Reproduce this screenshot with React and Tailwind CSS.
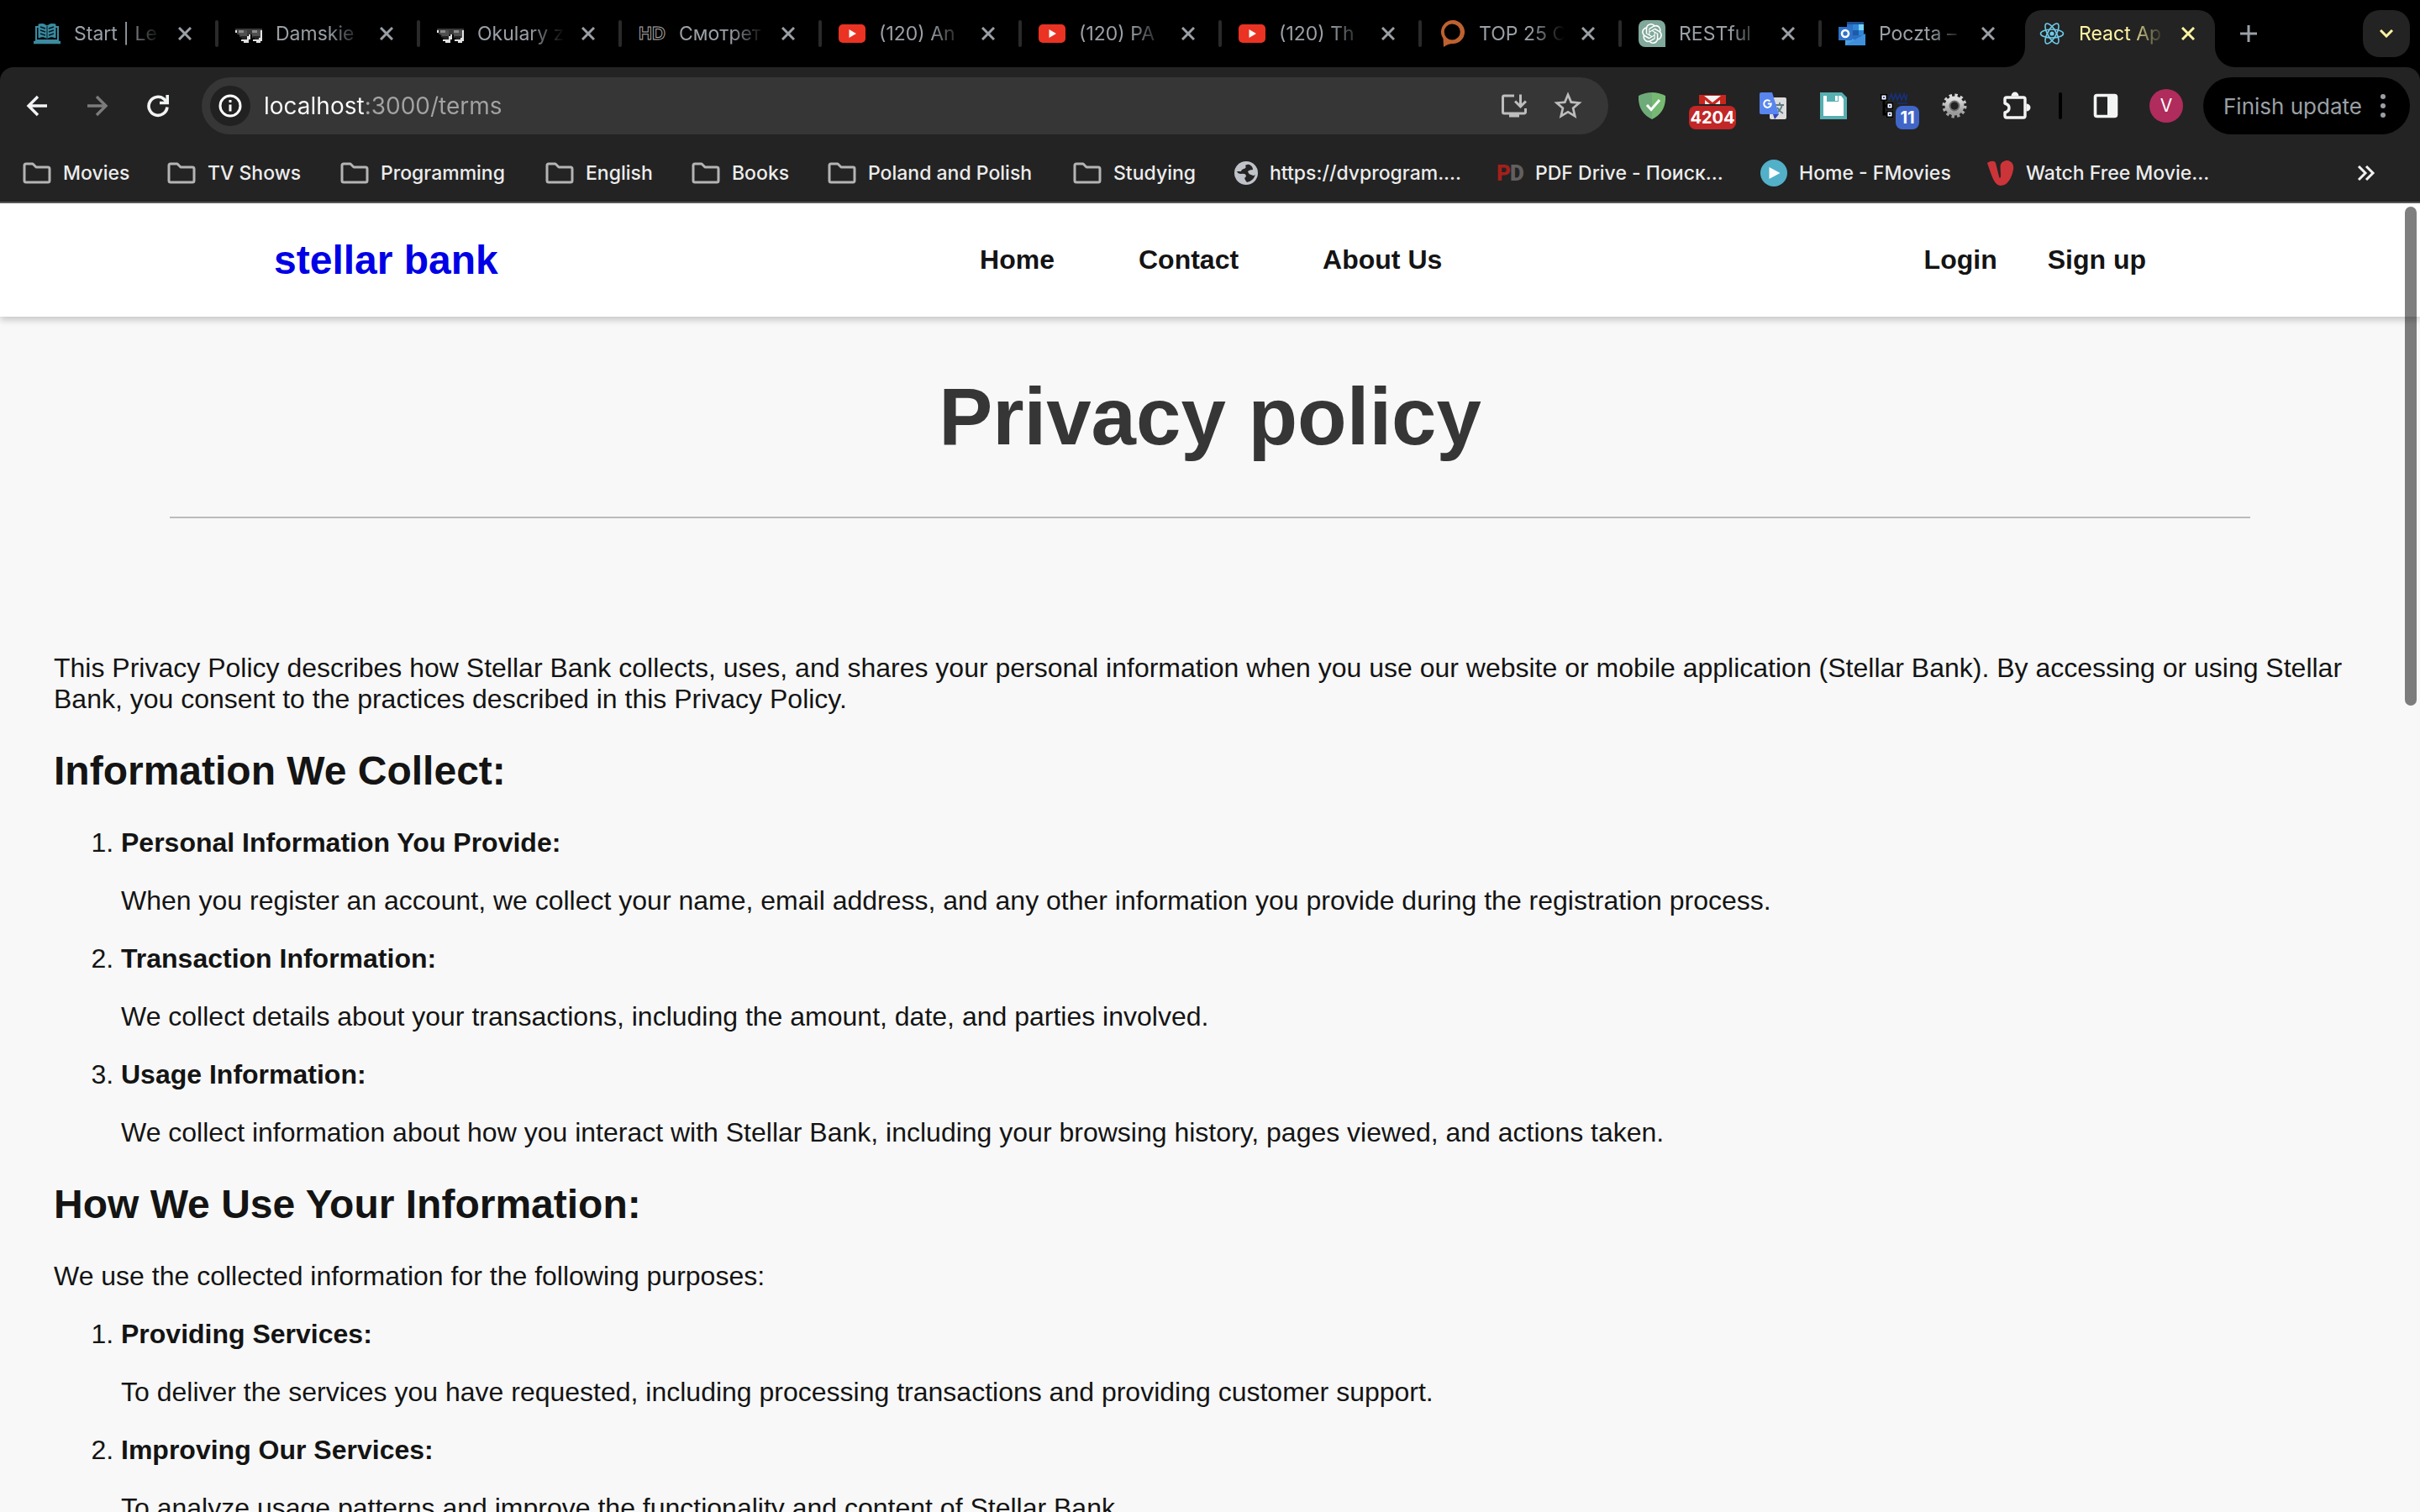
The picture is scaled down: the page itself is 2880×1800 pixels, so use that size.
import React from "react";
import { MdInstallDesktop, MdStarBorder } from "react-icons/md";
import { SiOpenai } from "react-icons/si";

/* ---------- favicons ---------- */

const BookIcon = () => (
  <svg viewBox="0 0 32 26" className="w-8 h-[26px]" fill="none" stroke="#3b8ba0">
    <path d="M6 2 Q12 0 16 4 Q20 0 26 2 V18 Q20 15 16 19 Q12 15 6 18Z" fill="#3b8ba0" strokeWidth="1" />
    <path d="M8 5 L14 7 M8 9 L14 11 M8 13 L14 15 M24 5 L18 7 M24 9 L18 11 M24 13 L18 15" stroke="#04171c" strokeWidth="1.5" />
    <path d="M16 4 V19" stroke="#04171c" strokeWidth="1" />
    <path d="M6 5 H3 V21 H29 V5 H26" strokeWidth="2" />
    <path d="M0 23.5 H32" strokeWidth="3.5" />
  </svg>
);

const GlassesIcon = () => (
  <svg viewBox="0 0 32 20" className="mt-1.5 w-8 h-5" shapeRendering="crispEdges">
    <path d="M0 1 H32 V3 H30 V12 H20 V8 H15 V12 H6 L4 8 H2 V3 H0Z" fill="#3a3a3a" />
    <path d="M4 3 H14 V12 H8 V10 H6 V8 H4Z M20 3 H30 V12 H22 V10 H20Z" fill="#505050" />
    <path d="M4 3 H10 V6 H4Z M20 3 H26 V6 H20Z" fill="#8c8c8c" />
    <path d="M6 10 H14 V14 H8 V12 H6Z M21 10 H29 V14 H23 V12 H21Z" fill="#242424" />
    <path d="M0 3 H2 V6 H0Z M16 8 H18 V14 H16 V18 H10 V16 H7 V14 H14 V10 H16Z M30 3 H32 V16 H30 V18 H25 V16 H21 V14 H28 V12 H30Z" fill="#e2e2e2" />
  </svg>
);

const HdIcon = () => (
  <span className="w-8 text-center text-[22px] leading-8 font-bold text-transparent [-webkit-text-stroke:1px_#a8a8a8] font-['Liberation_Sans',sans-serif]">HD</span>
);

const YoutubeIcon = () => (
  <svg viewBox="0 0 32 22" className="w-8 h-[22px]">
    <rect width="32" height="22" rx="5" fill="#ea3323" />
    <path d="M12.5 6 L21 11 L12.5 16Z" fill="#fff" />
  </svg>
);

const BubbleIcon = () => (
  <svg viewBox="0 0 32 32" className="w-8 h-8">
    <path d="M6 32 L5.500 22 A14 14 0 1 1 18 28 Q12 27.500 6 32Z M16 4.500 A9.500 9.500 0 1 0 16.500 23.500 A9.500 9.500 0 1 0 16 4.500Z" fill="#bf6130" fillRule="evenodd" />
  </svg>
);

const OpenAiIcon = () => (
  <span className="flex h-8 w-8 items-center justify-center rounded-tl-lg rounded-tr-lg rounded-bl-lg bg-[#80a89b]">
    <SiOpenai className="h-6 w-6 text-white" />
  </span>
);

const OutlookIcon = () => (
  <svg viewBox="0 0 32 28" className="w-8 h-7">
    <rect x="10" y="0" width="20" height="22" fill="#2a6fc4" />
    <rect x="10" y="0" width="20" height="3" fill="#1d4f91" />
    <rect x="17" y="3" width="7" height="7" fill="#2f86d6" />
    <rect x="24" y="3" width="6" height="7" fill="#76d3fa" />
    <rect x="17" y="10" width="7" height="6" fill="#1f5aa8" />
    <rect x="24" y="10" width="6" height="6" fill="#2f86d6" />
    <path d="M8 28 V16 L20 22 L32 14 V28Z" fill="#4aa0e3" />
    <path d="M8 28 L32 14 V28Z" fill="#3f8fdc" />
    <rect x="0" y="6" width="16" height="16" fill="#2f72c9" />
    <circle cx="8" cy="14" r="4" fill="none" stroke="#fff" strokeWidth="2.6" />
  </svg>
);

const ReactIcon = () => (
  <svg viewBox="-16 -16 32 32" className="w-8 h-8" fill="none" stroke="#6fc9e8" strokeWidth="1.6">
    <ellipse rx="13.5" ry="5" />
    <ellipse rx="13.5" ry="5" transform="rotate(60)" />
    <ellipse rx="13.5" ry="5" transform="rotate(120)" />
    <circle r="2.6" fill="#6fc9e8" stroke="none" />
  </svg>
);

/* ---------- toolbar drawings ---------- */

const CloseIcon = () => (
  <svg viewBox="0 0 16 16" className="w-4 h-4" fill="none" stroke="currentColor" strokeWidth="3">
    <path d="M1 1 L15 15 M15 1 L1 15" />
  </svg>
);

const ArrowIcon = ({ className = "" }) => (
  <svg viewBox="0 0 26 26" className={"w-[26px] h-[26px] " + className} fill="none" stroke="currentColor" strokeWidth="3.4">
    <path d="M25 13 H3 M14 2 L3 13 L14 24" />
  </svg>
);

const ReloadIcon = () => (
  <svg viewBox="0 0 28 28" className="w-7 h-7" fill="none" stroke="currentColor" strokeWidth="3.6">
    <path d="M25 15.5 A11 11 0 1 1 21.5 6.2 L24.5 9.5" />
    <path d="M25.2 1 V10.5 H16" />
  </svg>
);

const InfoIcon = () => (
  <svg viewBox="0 0 28 28" className="w-7 h-7" fill="none" stroke="#fff" strokeWidth="3">
    <circle cx="14" cy="14" r="12" />
    <path d="M14 12.5 V20.5 M14 7 V10" />
  </svg>
);

const ShieldIcon = () => (
  <svg viewBox="0 0 32 32" className="w-8 h-8">
    <path d="M16 0 Q8 0 0 4 Q-1 24 16 32Z" fill="#6eab78" />
    <path d="M16 0 Q24 0 32 4 Q33 24 16 32Z" fill="#76b972" />
    <path d="M10 15 L15 20.5 L25 9" fill="none" stroke="#fff" strokeWidth="3" />
  </svg>
);

const MailIcon = () => (
  <svg viewBox="0 0 32 32" className="w-8 h-8">
    <rect y="3" width="32" height="11" fill="#c9261e" />
    <path d="M6 4 H26 L16 12Z" fill="#f3f3f3" />
    <path d="M7 14 V9 L13 14Z M25 14 V9 L19 14Z" fill="#eee" />
  </svg>
);

const TranslateIcon = () => (
  <svg viewBox="0 0 32 32" className="w-8 h-8">
    <rect x="12" y="6" width="20" height="26" rx="2" fill="#dcdcdc" />
    <path d="M19 15 H29 M24 12 V15 M27 15 Q25 22 19 25 M21 18 Q24 23 28 25" stroke="#5c7c86" strokeWidth="1.8" fill="none" />
    <path d="M16 26 H23 L18 32Z" fill="#3446b8" />
    <path d="M2 0 H15 L23 26 H2 Q0 26 0 24 V2 Q0 0 2 0Z" fill="#5885ee" />
    <path d="M12.5 10.5 A4.3 4.3 0 1 0 13.8 13.6 H9.8" stroke="#fff" strokeWidth="2" fill="none" />
  </svg>
);

const SaveIcon = () => (
  <svg viewBox="0 0 32 32" className="w-8 h-8">
    <path d="M0 0 H26 L32 6 V32 H0Z" fill="#57afb2" />
    <path d="M4 4 H8 V11 H22 V4 H25 L28 8 V28 H4Z" fill="#fff" />
    <path d="M18 4 H21 V10 H18Z" fill="#fff" />
  </svg>
);

const TreeIcon = () => (
  <svg viewBox="0 0 32 32" className="w-8 h-8" fill="none">
    <path d="M4 8 V26 H9 M4 16 H9" stroke="#000" strokeWidth="3" />
    <path d="M10 9 L13 2 L15 9 L18 2 L20 9 L23 2 L25 9 L28 2 L30 9 L32 2 M20 13 H32" stroke="#16307c" strokeWidth="1.6" />
    {[[4, 6], [11, 16], [11, 26]].map(([x, y]) => (
      <g key={y}>
        <rect x={x - 4} y={y - 4} width="8" height="8" fill="#000" />
        <rect x={x - 2.5} y={y - 2.5} width="5" height="5" fill="#fff" />
        <rect x={x - 1} y={y - 1} width="2" height="2" fill="#2b4fc0" />
      </g>
    ))}
  </svg>
);

const GearIcon = () => (
  <svg viewBox="0 0 32 32" className="w-8 h-8" fill="none">
    <defs>
      <linearGradient id="steel" x1="0" y1="0" x2="0" y2="1">
        <stop offset="0" stopColor="#dedede" />
        <stop offset="1" stopColor="#9a9a9a" />
      </linearGradient>
    </defs>
    <circle cx="16" cy="16" r="12.5" stroke="url(#steel)" strokeWidth="4" strokeDasharray="3.3 3.24" />
    <circle cx="16" cy="16" r="8.2" stroke="url(#steel)" strokeWidth="6.5" />
    <circle cx="16" cy="16" r="5.6" stroke="#6b6b6b" strokeWidth="1.6" />
  </svg>
);

const PuzzleIcon = () => (
  <svg viewBox="0 0 34 34" className="ml-1 w-[34px] h-[34px]" fill="none" stroke="#f3f5f4" strokeWidth="3.4" strokeLinejoin="round">
    <path d="M3 14 V9 Q3 7 5 7 H25 Q27 7 27 9 V29 Q27 31 25 31 H5 Q3 31 3 29 V25 Q8 23.5 8 19.500 Q8 15.500 3 14Z" />
    <path d="M10.500 5.500 A4.500 5 0 0 1 19.500 5.500Z M28.500 14.500 A5 4.500 0 0 1 28.500 23.500Z" fill="#f3f5f4" stroke="none" />
  </svg>
);

const PanelIcon = () => (
  <svg viewBox="0 0 30 30" className="w-[30px] h-[30px]" fill="none">
    <rect x="2.500" y="2.500" width="25" height="25" rx="2" stroke="#f3f5f4" strokeWidth="3.600" />
    <rect x="17" y="2" width="11" height="26" fill="#f3f5f4" />
  </svg>
);

/* ---------- bookmark drawings ---------- */

const FolderIcon = () => (
  <svg viewBox="0 0 34 26" className="w-[34px] h-[26px]" fill="none" stroke="#b4b4b4" strokeWidth="3" strokeLinejoin="round">
    <path d="M2 4 Q2 2 4 2 H12 L16 6 H30 Q32 6 32 8 V22 Q32 24 30 24 H4 Q2 24 2 22Z" />
  </svg>
);

const GlobeIcon = () => (
  <svg viewBox="0 0 28 28" className="w-7 h-7">
    <circle cx="14" cy="14" r="14" fill="#bfc2c9" />
    <path d="M3 12 Q4 15 8 15 Q13 14 14 17 Q14 19 12 20 Q13 23 15 25 Q22 24 25 16 Q23 18 20 16 Q16 15 17 12 Q19 10 22 10 Q22 6 18 4 Q16 3 13 5 Q15 8 11 9 Q8 10 8 12Z" fill="#242424" />
    <path d="M16 12 Q19 9 23 12 Q24 15 21 16 Q17 15 16 12Z" fill="#bfc2c9" />
  </svg>
);

const PdIcon = () => (
  <span className="flex w-8 text-[26px] font-black leading-8 font-[Roboto,sans-serif]">
    <span className="w-4 text-[#a3201b]">P</span>
    <span className="w-4 text-[#625f5f]">D</span>
  </span>
);

const PlayIcon = () => (
  <svg viewBox="0 0 32 32" className="w-8 h-8">
    <circle cx="16" cy="16" r="16" fill="#52b0c8" />
    <path d="M10.500 9 L23.500 16 L10.500 23Z" fill="#fff" />
  </svg>
);

const VIcon = () => (
  <svg viewBox="0 0 32 32" className="w-8 h-8">
    <path d="M0 4 C4 1 9 1 10 4 L14 20 Q15 24 16 20 L15.500 8 C16 3 20 1 24 1 C30 2 32 7 31 12 C29 22 24 31 16 31 C9 31 6 22 0 4Z" fill="#cb3439" />
  </svg>
);

/* ---------- data ---------- */

const tabs = [
  { title: "Start | Le", Icon: BookIcon, width: "w-[240px]" },
  { title: "Damskie", Icon: GlassesIcon, width: "w-[240px]" },
  { title: "Okulary z", Icon: GlassesIcon, width: "w-[240px]" },
  { title: "Смотрет", Icon: HdIcon, width: "w-[238px]" },
  { title: "(120) An", Icon: YoutubeIcon, width: "w-[238px]" },
  { title: "(120) PA", Icon: YoutubeIcon, width: "w-[238px]" },
  { title: "(120) Th", Icon: YoutubeIcon, width: "w-[238px]" },
  { title: "TOP 25 C", Icon: BubbleIcon, width: "w-[238px]" },
  { title: "RESTful", Icon: OpenAiIcon, width: "w-[238px]" },
  { title: "Poczta –", Icon: OutlookIcon, width: "w-[238px]", last: true },
];

const bookmarks = [
  { label: "Movies", Icon: FolderIcon, width: "w-[172px]" },
  { label: "TV Shows", Icon: FolderIcon, width: "w-[206px]" },
  { label: "Programming", Icon: FolderIcon, width: "w-[244px]" },
  { label: "English", Icon: FolderIcon, width: "w-[174px]" },
  { label: "Books", Icon: FolderIcon, width: "w-[162px]" },
  { label: "Poland and Polish", Icon: FolderIcon, width: "w-[292px]" },
  { label: "Studying", Icon: FolderIcon, width: "w-[192px]" },
  { label: "https://dvprogram....", Icon: GlobeIcon, width: "w-[312px]" },
  { label: "PDF Drive - Поиск...", Icon: PdIcon, width: "w-[314px]" },
  { label: "Home - FMovies", Icon: PlayIcon, width: "w-[270px]" },
  { label: "Watch Free Movie...", Icon: VIcon, width: "w-[300px]" },
];

const sections = [
  {
    heading: "Information We Collect:",
    items: [
      ["Personal Information You Provide:", "When you register an account, we collect your name, email address, and any other information you provide during the registration process."],
      ["Transaction Information:", "We collect details about your transactions, including the amount, date, and parties involved."],
      ["Usage Information:", "We collect information about how you interact with Stellar Bank, including your browsing history, pages viewed, and actions taken."],
    ],
  },
  {
    heading: "How We Use Your Information:",
    intro: "We use the collected information for the following purposes:",
    items: [
      ["Providing Services:", "To deliver the services you have requested, including processing transactions and providing customer support."],
      ["Improving Our Services:", "To analyze usage patterns and improve the functionality and content of Stellar Bank."],
    ],
  },
];

/* ---------- browser frame ---------- */

function TabTitle({ children }) {
  return (
    <span className="min-w-0 flex-1 overflow-hidden whitespace-nowrap [mask-image:linear-gradient(to_right,#000_60%,transparent)]">
      {children}
    </span>
  );
}

function Tab({ title, Icon, width, last }) {
  return (
    <div className={"flex h-20 min-w-0 items-center pl-5 text-[#9aa0a6] " + width}>
      <span className="mr-4 flex w-8 shrink-0 justify-center"><Icon /></span>
      <TabTitle>{title}</TabTitle>
      <button aria-label={"Close " + title} className="ml-3 mr-5 flex h-8 w-8 shrink-0 items-center justify-center"><CloseIcon /></button>
      <span className={"h-8 w-1 shrink-0 rounded-sm " + (last ? "bg-transparent" : "bg-[#2a2a2a]")} />
    </div>
  );
}

function TabStrip() {
  return (
    <div className="flex h-20 items-center pl-5 pr-3 text-[23px]">
      {tabs.map((t, i) => <Tab key={i} {...t} />)}
      <div className="relative ml-1 mt-3 flex h-[68px] w-[226px] min-w-0 items-center rounded-t-[20px] bg-[#232323] pb-3 pl-4 text-[#fff3a3]">
        <svg viewBox="0 0 24 24" className="absolute bottom-0 right-full h-6 w-6" fill="#232323"><path d="M24 0 V24 H0 A24 24 0 0 0 24 0Z" /></svg>
        <svg viewBox="0 0 24 24" className="absolute bottom-0 left-full h-6 w-6" fill="#232323"><path d="M0 0 V24 H24 A24 24 0 0 1 0 0Z" /></svg>
        <span className="mr-4 shrink-0"><ReactIcon /></span>
        <TabTitle>React Ap</TabTitle>
        <button aria-label="Close React App" className="ml-3 mr-4 flex h-8 w-8 shrink-0 items-center justify-center"><CloseIcon /></button>
      </div>
      <button aria-label="New tab" className="ml-6 flex h-8 w-8 shrink-0 items-center justify-center text-[#9aa0a6]">
        <svg viewBox="0 0 20 20" className="h-5 w-5" stroke="currentColor" strokeWidth="3"><path d="M10 0 V20 M0 10 H20" /></svg>
      </button>
      <button aria-label="Search tabs" className="ml-auto flex h-14 w-14 shrink-0 items-center justify-center rounded-[20px] bg-[#232323] text-[#fff3a3]">
        <svg viewBox="0 0 16 10" className="h-[10px] w-4" fill="none" stroke="currentColor" strokeWidth="3"><path d="M1 1 L8 8 L15 1" /></svg>
      </button>
    </div>
  );
}

function ToolButton({ label, children, className = "" }) {
  return (
    <button aria-label={label} className={"relative flex h-[68px] w-[72px] shrink-0 items-center justify-center " + className}>
      {children}
    </button>
  );
}

function Toolbar() {
  return (
    <div className="flex h-[92px] items-center pl-2 pr-3 text-[#f1f3f4]">
      <ToolButton label="Back"><ArrowIcon /></ToolButton>
      <ToolButton label="Forward" className="text-[#7b7b7b]"><ArrowIcon className="rotate-180" /></ToolButton>
      <ToolButton label="Reload"><ReloadIcon /></ToolButton>

      <div className="ml-4 mr-4 flex h-[68px] min-w-0 flex-1 items-center rounded-full bg-[#363636] pl-[10px] pr-4">
        <button aria-label="View site information" className="flex h-12 w-12 shrink-0 items-center justify-center rounded-full bg-[#212121]"><InfoIcon /></button>
        <input
          aria-label="Address"
          defaultValue="localhost:3000/terms"
          className="ml-4 h-12 min-w-0 flex-1 bg-[linear-gradient(to_right,#fff_120px,#a3a3a3_120px)] bg-clip-text text-[28px] text-transparent outline-none"
        />
        <button aria-label="Install app" className="flex h-16 w-16 items-center justify-center text-[#bdbdbd]"><MdInstallDesktop className="h-9 w-9" /></button>
        <button aria-label="Bookmark this page" className="flex h-16 w-16 items-center justify-center text-[#bdbdbd]"><MdStarBorder className="h-10 w-10" /></button>
      </div>

      <ToolButton label="Ad blocker"><ShieldIcon /></ToolButton>
      <ToolButton label="Mail">
        <MailIcon />
        <span className="absolute bottom-1.5 left-2 flex h-7 w-14 items-center justify-center rounded-lg bg-[#c22626] text-[20px] font-bold text-white">4204</span>
      </ToolButton>
      <ToolButton label="Translate"><TranslateIcon /></ToolButton>
      <ToolButton label="Save page"><SaveIcon /></ToolButton>
      <ToolButton label="Page outline">
        <TreeIcon />
        <span className="absolute bottom-1.5 right-1.5 flex h-7 w-7 items-center justify-center rounded-lg bg-[#4166c8] text-[20px] font-bold text-white">11</span>
      </ToolButton>
      <ToolButton label="Settings"><GearIcon /></ToolButton>
      <ToolButton label="Extensions"><PuzzleIcon /></ToolButton>
      <span className="mx-4 h-8 w-1 shrink-0 rounded-sm bg-black" />
      <ToolButton label="Side panel"><PanelIcon /></ToolButton>
      <ToolButton label="Profile">
        <span className="flex h-10 w-10 items-center justify-center rounded-full bg-[#b02c5c] text-[21px] text-white">V</span>
      </ToolButton>
      <button className="ml-2 flex h-[68px] w-[246px] shrink-0 items-center justify-between rounded-full bg-black pl-6 pr-7 text-[26px] text-[#9aa0a6]">
        <span className="whitespace-nowrap">Finish update</span>
        <svg viewBox="0 0 8 28" className="h-7 w-2" fill="currentColor"><circle cx="4" cy="3" r="3" /><circle cx="4" cy="14" r="3" /><circle cx="4" cy="25" r="3" /></svg>
      </button>
    </div>
  );
}

function BookmarkBar() {
  return (
    <div className="flex h-[68px] items-center pl-[27px] pr-[53px] text-[23px] font-medium text-[#ececec]">
      {bookmarks.map(({ label, Icon, width }) => (
        <a key={label} href="#" className={"flex min-w-0 items-center whitespace-nowrap " + width}>
          <span className="mr-3.5 shrink-0"><Icon /></span>
          {label}
        </a>
      ))}
      <button aria-label="More bookmarks" className="ml-auto">
        <svg viewBox="0 0 22 18" className="h-[18px] w-[22px]" fill="none" stroke="#f1f1f1" strokeWidth="3"><path d="M2 1 L10 9 L2 17 M11 1 L19 9 L11 17" /></svg>
      </button>
    </div>
  );
}

/* ---------- site ---------- */

function SiteHeader() {
  return (
    <header className="bg-white shadow-[0_4px_8px_rgba(0,0,0,0.2)]">
      <div className="mx-auto flex h-[135px] max-w-[2228px] items-center justify-between text-[32px] font-bold">
        <a href="#" className="text-[48px] text-[#0000e6]">stellar bank</a>
        <nav className="flex gap-[100px]">
          <a href="#">Home</a>
          <a href="#">Contact</a>
          <a href="#">About Us</a>
        </nav>
        <div className="flex gap-[60px]">
          <a href="#">Login</a>
          <a href="#">Sign up</a>
        </div>
      </div>
    </header>
  );
}

export default function App() {
  return (
    <div className="flex h-screen flex-col overflow-hidden bg-black">
      <div className="shrink-0 font-[Inter,sans-serif]">
        <TabStrip />
        <div className="rounded-t-[16px] border-b-2 border-[#555] bg-[#232323]">
          <Toolbar />
          <BookmarkBar />
        </div>
      </div>

      <div className="relative min-h-0 flex-1 overflow-hidden bg-[#f8f8f8] text-[32px] leading-[37px] text-[#141414] font-['Liberation_Sans',Arial,sans-serif]">
        <SiteHeader />
        <main>
          <h1 className="my-16 text-center text-[96px] font-bold leading-[110px] text-[#363636]">Privacy policy</h1>
          <hr className="mx-[202px] border-t-2 border-[#bbb]" />
          <div className="mt-40 px-16">
            <p>
              This Privacy Policy describes how Stellar Bank collects, uses, and shares your personal information when you use our website or mobile application (Stellar Bank). By accessing or using Stellar Bank, you consent to the practices described in this Privacy Policy.
            </p>
            {sections.map(({ heading, intro, items }) => (
              <section key={heading}>
                <h2 className="my-10 text-[48px] font-bold leading-[54px]">{heading}</h2>
                {intro && <p className="mb-8">{intro}</p>}
                <ol className="list-decimal space-y-8 pl-20">
                  {items.map(([name, text]) => (
                    <li key={name}>
                      <strong>{name}</strong>
                      <p className="mt-8">{text}</p>
                    </li>
                  ))}
                </ol>
              </section>
            ))}
          </div>
        </main>
        <div className="absolute right-1 top-1 h-[594px] w-[14px] rounded-full bg-black/50" />
      </div>
    </div>
  );
}
